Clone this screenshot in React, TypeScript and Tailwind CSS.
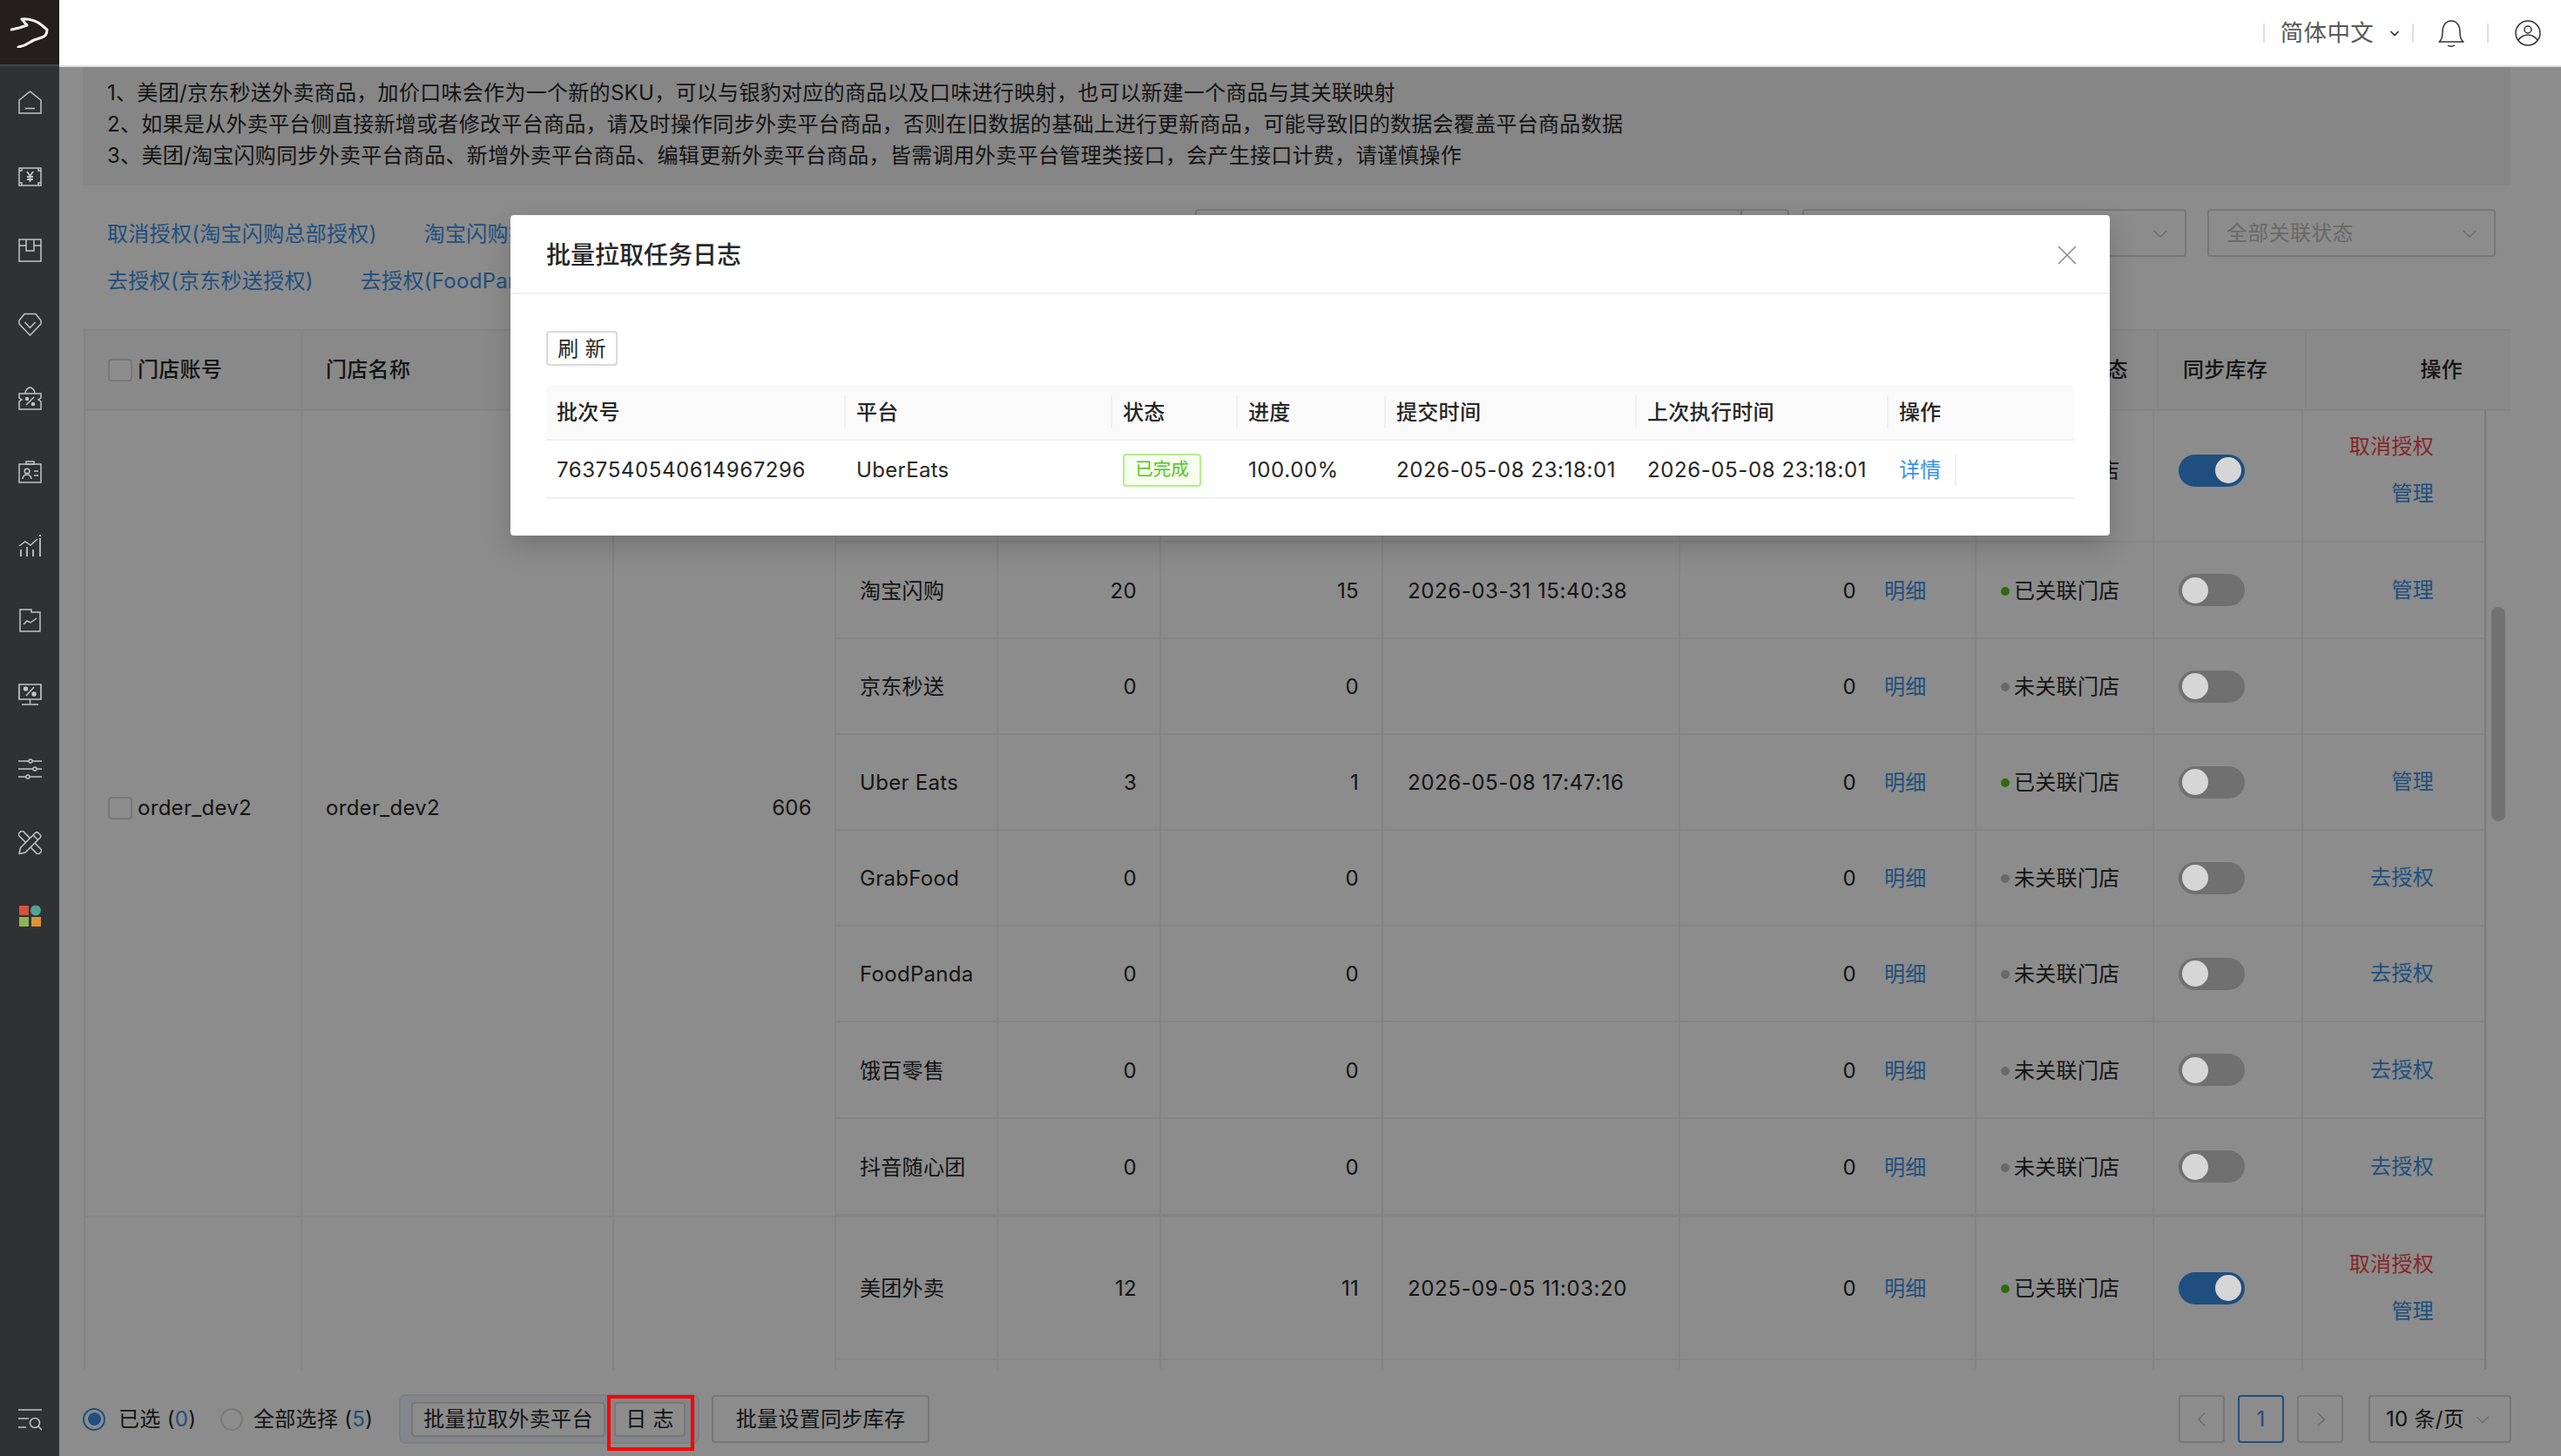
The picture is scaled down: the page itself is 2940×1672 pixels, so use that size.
import React from 'react';

// colours are the undimmed ones, the modal mask darkens everything under it
const FONT = 'font-[Inter,"Noto_Sans_CJK_SC",sans-serif]';

const Chevron = ({ className, dir = 'down', weight = 1.6 }: { className?: string; dir?: 'down' | 'left' | 'right'; weight?: number }) => (
  <svg viewBox="0 0 24 24" className={className} fill="none" stroke="currentColor" strokeWidth={weight}>
    {dir === 'down' && <path d="M3 8l9 9 9-9" />}
    {dir === 'left' && <path d="M16 3l-9 9 9 9" />}
    {dir === 'right' && <path d="M8 3l9 9-9 9" />}
  </svg>
);

const NavIcon = ({ children }: { children: React.ReactNode }) => (
  <svg viewBox="0 0 27 27" className="w-[27px] h-[27px]" fill="none" stroke="#c4c4c4" strokeWidth="1.5">
    {children}
  </svg>
);

const navIcons = [
  <NavIcon key="home">
    <path d="M1 11L13.5 1 26 11v15H1z" />
    <path d="M8 20.5h11" />
  </NavIcon>,
  <NavIcon key="money">
    <path d="M1 4h25v20H1z" />
    <path d="M4 4v3H1M23 4v3h3M4 24v-3H1M23 24v-3h3" />
    <path d="M10 8l3.5 5L17 8M13.5 13v7M10 14h7M10 17h7" strokeWidth="1.8" />
  </NavIcon>,
  <NavIcon key="box">
    <path d="M1 1h25v25H1z" />
    <path d="M1 8h8M18 8h8M9 1v13h9V1" />
  </NavIcon>,
  <NavIcon key="diamond">
    <path d="M7 1.5h13L26 9v4L13.5 26 1 13V9z" strokeLinejoin="round" />
    <path d="M7.5 11l6 6.5 6-6.5" />
  </NavIcon>,
  <NavIcon key="coupon">
    <path d="M1 8h25v5l-3 2 3 2v9H1v-9l3-2-3-2z" />
    <path d="M8 8c0-4 3-7 5.500-7S19 4 19 8" />
    <path d="M9 21l9-9" />
    <circle cx="10" cy="14" r="1.500" fill="#c4c4c4" />
    <circle cx="17" cy="20" r="1.500" fill="#c4c4c4" />
  </NavIcon>,
  <NavIcon key="card">
    <path d="M1 4h25v21H1z" />
    <path d="M9 1h9v3H9z" />
    <circle cx="10" cy="12" r="2.800" />
    <path d="M5 21c.5-4 2.500-5 5-5s4.500 1 5 5M18 12h5M18 17h5" />
  </NavIcon>,
  <NavIcon key="chart">
    <path d="M1 13l7-5 6 4 8-7" />
    <path d="M3 17v8M10 14v11M17 17v8M25 4v21" strokeWidth="1.8" />
    <path d="M25 0v2" strokeWidth="2" />
  </NavIcon>,
  <NavIcon key="report">
    <path d="M2 1h13v3h10v22H2z" />
    <path d="M6 18l4-4 4 2 7-5" />
  </NavIcon>,
  <NavIcon key="monitor">
    <path d="M1 2h25v17H1z" strokeWidth="1.7" />
    <path d="M13.500 19v5M4 25h19M9 15l9-10" />
    <circle cx="8.500" cy="7" r="2" fill="#c4c4c4" />
    <circle cx="18" cy="13" r="2" fill="#c4c4c4" />
  </NavIcon>,
  <NavIcon key="sliders">
    <path d="M0 5h27M0 14h27M0 23h27" />
    <circle cx="14" cy="5" r="2" fill="#303133" />
    <circle cx="19" cy="14" r="2" fill="#303133" />
    <circle cx="11" cy="23" r="2" fill="#303133" />
  </NavIcon>,
  <NavIcon key="tools">
    <rect x="10" y="-3" width="7" height="33" rx="2.500" transform="rotate(-45 13.5 13.5)" />
    <path d="M19.500 2.500a2.500 2.500 0 013.500 0l2 2a2.500 2.500 0 010 3.500L8 25l-7 1.500L2.500 19.500z" strokeLinejoin="round" fill="#303133" />
    <path d="M17 5l5.500 5.500" />
  </NavIcon>,
];

const AppsIcon = () => (
  <svg viewBox="0 0 27 27" className="w-[27px] h-[27px]">
    <rect x="1" y="1" width="11" height="11" fill="#d2553a" />
    <circle cx="20" cy="6.500" r="6" fill="#52a396" />
    <rect x="1" y="14" width="11" height="11" fill="#8db651" />
    <rect x="15" y="14" width="11" height="11" fill="#dc9237" />
  </svg>
);

const Sidebar = () => (
  <aside className="relative z-20 w-[68px] h-[1672px] shrink-0 bg-[#303133] flex flex-col items-center">
    <div className="w-full h-[76px] bg-[#231f1e] border-b-2 border-[#45474b] flex items-center justify-center shrink-0">
      <svg viewBox="0 0 44 36" className="w-[44px] h-[36px]" fill="none" stroke="#f2f2f2" strokeLinejoin="round" strokeLinecap="round">
        <path d="M1 15l9-2 9-3-6-7c9-1 19 3 23 7l6 5c0 5-2 8-6 9l-9 3c-5 2-7 6-18 8" strokeWidth="3" />
      </svg>
    </div>
    <div className="flex flex-col items-center gap-[58px] pt-[28px]">
      {navIcons.map((icon) => icon)}
      <AppsIcon />
    </div>
    <div className="mt-auto mb-[29px]">
      <NavIcon>
        <path d="M0 3h27M0 13h12M0 23h9" />
        <circle cx="19" cy="18" r="5.500" />
        <path d="M23 22l4 4" />
      </NavIcon>
    </div>
  </aside>
);

const Divider = () => <span className="block w-[2px] h-[22px] bg-[#dedede]" />;

const TopBar = () => (
  <header className="relative z-20 h-[77px] bg-white border-b-2 border-[#dcdcdc] flex items-center justify-end shrink-0">
    <Divider />
    <span className="ml-[18px] text-[26.500px] text-[#595959]">简体中文</span>
    <Chevron weight={3.500} className="w-[12px] h-[12px] ml-[18px] text-[#333]" />
    <span className="ml-[14px]"><Divider /></span>
    <svg viewBox="0 0 30 32" className="w-[30px] h-[32px] ml-[28px]" fill="none" stroke="#333" strokeWidth="1.500">
      <path d="M1 26c3-2 4-5 4-11C5 7 9 2 15 2s10 5 10 13c0 6 1 9 4 11z" strokeLinejoin="round" />
      <path d="M11 30c2 1.500 6 1.500 8 0" />
    </svg>
    <span className="ml-[26px]"><Divider /></span>
    <svg viewBox="0 0 30 30" className="w-[30px] h-[30px] ml-[30px] mr-[23px]" fill="none" stroke="#333" strokeWidth="1.500">
      <circle cx="15" cy="15" r="14" />
      <circle cx="15" cy="11" r="4" />
      <path d="M4 23c3-4 7-6 11-6s8 2 11 6" />
    </svg>
  </header>
);

const notices = [
  '1、美团/京东秒送外卖商品，加价口味会作为一个新的SKU，可以与银豹对应的商品以及口味进行映射，也可以新建一个商品与其关联映射',
  '2、如果是从外卖平台侧直接新增或者修改平台商品，请及时操作同步外卖平台商品，否则在旧数据的基础上进行更新商品，可能导致旧的数据会覆盖平台商品数据',
  '3、美团/淘宝闪购同步外卖平台商品、新增外卖平台商品、编辑更新外卖平台商品，皆需调用外卖平台管理类接口，会产生接口计费，请谨慎操作',
];

const Select = ({ width, label }: { width: string; label?: string }) => (
  <div className={`${width} h-[55px] border-2 border-[#d9d9d9] rounded-[4px] flex items-center justify-between pl-[20px] pr-[18px] bg-white`}>
    <span className="text-[#bfbfbf]">{label}</span>
    <Chevron className="w-[20px] h-[20px] text-[#bfbfbf]" />
  </div>
);

const Filters = () => (
  <div className="h-[165px] ml-[27px] mr-[58px] flex justify-between items-start shrink-0">
    <div className="pl-[28px] pt-[39px] flex flex-col gap-[20px] text-[#3a90e6] leading-[34px]">
      <div className="flex gap-[54px]">
        <span>取消授权(淘宝闪购总部授权)</span>
        <span>淘宝闪购授权</span>
      </div>
      <div className="flex gap-[54px]">
        <span>去授权(京东秒送授权)</span>
        <span>去授权(FoodPanda授权)</span>
      </div>
    </div>
    <div className="flex items-center mt-[27px] mr-[17px]">
      <div className="w-[628px] h-[55px] border-2 border-[#d9d9d9] rounded-l-[4px] bg-white" />
      <div className="w-[54px] h-[55px] border-2 border-l-0 border-[#d9d9d9] rounded-r-[4px] bg-white" />
      <div className="ml-[15px]"><Select width="w-[441px]" /></div>
      <div className="ml-[24px]"><Select width="w-[331px]" label="全部关联状态" /></div>
    </div>
  </div>
);

const Toggle = ({ on }: { on: boolean }) => (
  <div className={`w-[76px] h-[37px] rounded-full flex items-center px-[4px] ${on ? 'bg-[#3a90e6] justify-end' : 'bg-[#cccccc] justify-start'}`}>
    <span className="relative z-20 w-[30px] h-[30px] rounded-full bg-[#d6d6d6]" />
  </div>
);

type Row = {
  platform?: string;
  a?: number;
  b?: number;
  time?: string;
  linked?: boolean;
  sync?: boolean;
  action?: string[];
  height: string;
};

const group1: Row[] = [
  { platform: '美团外卖', a: 12, b: 11, time: '2025-09-05 11:03:20', linked: true, sync: true, action: ['取消授权', '管理'], height: 'h-[164px]' },
  { platform: '淘宝闪购', a: 20, b: 15, time: '2026-03-31 15:40:38', linked: true, action: ['管理'], height: 'h-[111px]' },
  { platform: '京东秒送', a: 0, b: 0, linked: false, height: 'h-[110px]' },
  { platform: 'Uber Eats', a: 3, b: 1, time: '2026-05-08 17:47:16', linked: true, action: ['管理'], height: 'h-[110px]' },
  { platform: 'GrabFood', a: 0, b: 0, linked: false, action: ['去授权'], height: 'h-[110px]' },
  { platform: 'FoodPanda', a: 0, b: 0, linked: false, action: ['去授权'], height: 'h-[110px]' },
  { platform: '饿百零售', a: 0, b: 0, linked: false, action: ['去授权'], height: 'h-[111px]' },
  { platform: '抖音随心团', a: 0, b: 0, linked: false, action: ['去授权'], height: 'h-[111px]' },
];

// second store, only its first row is on screen, the next one is scrolled off
const group2: Row[] = [
  { platform: '美团外卖', a: 12, b: 11, time: '2025-09-05 11:03:20', linked: true, sync: true, action: ['取消授权', '管理'], height: 'h-[164px]' },
  { height: 'h-[110px]' },
];

const PlatformRow = ({ row }: { row: Row }) => (
  <div className={`flex ${row.height} border-b-2 border-[#f0f0f0]`}>
    <div className="w-[186px] border-r-2 border-[#f3f3f3] flex items-center pl-[27px] pt-[2px]">{row.platform}</div>
    <div className="w-[187px] border-r-2 border-[#f3f3f3] flex items-center justify-end pr-[26px] pt-[2px]">{row.a}</div>
    <div className="w-[255px] border-r-2 border-[#f3f3f3] flex items-center justify-end pr-[26px] pt-[2px]">{row.b}</div>
    <div className="w-[341px] border-r-2 border-[#f3f3f3] flex items-center pl-[28px] pt-[2px] tracking-[0.6px]">{row.time}</div>
    <div className="w-[218px] flex items-center justify-end pr-[16px] pt-[2px]">{row.platform && '0'}</div>
    <div className="w-[122px] border-r-2 border-[#f3f3f3] flex items-center pl-[16px] pt-[2px] text-[#3a90e6]">{row.platform && '明细'}</div>
    <div className="w-[204px] border-r-2 border-[#f3f3f3] flex items-center pl-[28px] pt-[2px]">
      {row.platform && (
        <>
          <span className={`w-[10px] h-[10px] rounded-full ${row.linked ? 'bg-[#52c41a]' : 'bg-[#bfbfbf]'}`} />
          <span className="ml-[5px]">{row.linked ? '已关联门店' : '未关联门店'}</span>
        </>
      )}
    </div>
    <div className="w-[171px] border-r-2 border-[#f3f3f3] flex items-center pl-[28px]">
      {row.platform && <Toggle on={!!row.sync} />}
    </div>
    <div className="w-[208px] flex flex-col items-end justify-center gap-[20px] pr-[58px] leading-[34px]">
      {row.action?.map((a) => (
        <span key={a} className={a === '取消授权' ? 'text-[#f5484a]' : 'text-[#3a90e6]'}>{a}</span>
      ))}
    </div>
  </div>
);

const StoreGroup = ({ rows, account, name, count }: { rows: Row[]; account?: string; name?: string; count?: number }) => (
  <div className="flex border-b-2 border-[#f0f0f0]">
    <div className="w-[249px] shrink-0 border-r-2 border-[#f3f3f3] flex items-center pl-[26px]">
      {account && (
        <>
          <span className="w-[28px] h-[26px] border-2 border-[#d9d9d9] rounded-[4px] bg-white" />
          <span className="ml-[6px]">{account}</span>
        </>
      )}
    </div>
    <div className="w-[358px] shrink-0 border-r-2 border-[#f3f3f3] flex items-center pl-[27px]">{name}</div>
    <div className="w-[255px] shrink-0 border-r-2 border-[#f3f3f3] flex items-center justify-end pr-[26px]">{count}</div>
    <div className="flex-1">
      {rows.map((r, i) => (
        <PlatformRow key={i} row={r} />
      ))}
    </div>
  </div>
);

const headCell = 'h-full border-r-2 border-[#f0f0f0] flex items-center font-medium';

const StoreTable = () => (
  <div className="ml-[28px] mr-[58px] h-[1195px] border-l-2 border-[#f0f0f0] shrink-0 flex flex-col overflow-hidden">
    <div className="h-[94px] shrink-0 flex bg-[#fafafa] border-y-2 border-[#f0f0f0]">
      <div className={`${headCell} w-[249px] pl-[26px]`}>
        <span className="w-[28px] h-[26px] border-2 border-[#d9d9d9] rounded-[4px] bg-white" />
        <span className="ml-[6px]">门店账号</span>
      </div>
      <div className={`${headCell} w-[358px] pl-[27px]`}>门店名称</div>
      <div className={`${headCell} w-[255px]`} />
      <div className={`${headCell} w-[1309px]`} />
      <div className={`${headCell} w-[209px] pl-[28px]`}>门店关联状态</div>
      <div className={`${headCell} w-[170px] pl-[28px]`}>同步库存</div>
      <div className="h-full flex-1 flex items-center justify-end pr-[55px] font-medium">操作</div>
    </div>
    <div className="flex-1 flex overflow-hidden">
      <div className="w-[2754px] shrink-0 overflow-hidden">
        <div className="-mt-[13px]">
          <StoreGroup rows={group1} account="order_dev2" name="order_dev2" count={606} />
          <StoreGroup rows={group2} />
        </div>
      </div>
      <div className="flex-1 border-l-2 border-[#e0e0e0] pt-[225px] flex justify-center">
        <div className="w-[16px] h-[246px] rounded-full bg-[#cfcfcf]" />
      </div>
    </div>
  </div>
);

const PageBtn = ({ children, active }: { children: React.ReactNode; active?: boolean }) => (
  <div className={`w-[53px] h-[55px] border-2 rounded-[4px] flex items-center justify-center ${active ? 'border-[#3a90e6] text-[#3a90e6]' : 'border-[#d9d9d9] text-[#bfbfbf]'}`}>
    {children}
  </div>
);

const ToolBtn = ({ className, children }: { className: string; children: React.ReactNode }) => (
  <div className={`${className} border-2 border-[#d9d9d9] rounded-[4px] bg-white flex items-center justify-center`}>{children}</div>
);

const Footer = () => (
  <div className="h-[99px] pl-[27px] pr-[57px] pt-[28px] pb-[14px] flex items-center justify-between shrink-0">
    <div className="flex items-center">
      <span className="w-[26px] h-[26px] rounded-full border-2 border-[#3a90e6] flex items-center justify-center">
        <span className="w-[15px] h-[15px] rounded-full bg-[#3a90e6]" />
      </span>
      <span className="w-[117px] ml-[15px]">已选 (<span className="text-[#3a90e6]">0</span>)</span>
      <span className="w-[26px] h-[26px] rounded-full border-2 border-[#d9d9d9] bg-white" />
      <span className="w-[167px] ml-[12px]">全部选择 (<span className="text-[#3a90e6]">5</span>)</span>
      <div className="relative h-[57px] w-[345px] rounded-[8px] border-2 border-[#e2e7f0] bg-[#f0f5ff] flex items-center pl-[12px]">
        <ToolBtn className="w-[223px] h-[40px]">批量拉取外卖平台</ToolBtn>
        <ToolBtn className="w-[82px] h-[40px] ml-[10px]">日 志</ToolBtn>
        <div className="absolute z-20 left-[237px] -top-[1px] w-[100px] h-[64px] border-4 border-[#ff0000]" />
      </div>
      <ToolBtn className="w-[250px] h-[55px] ml-[14px]">批量设置同步库存</ToolBtn>
    </div>
    <div className="flex items-center">
      <PageBtn><Chevron dir="left" className="w-[20px] h-[20px]" /></PageBtn>
      <div className="ml-[15px]"><PageBtn active>1</PageBtn></div>
      <div className="ml-[15px]"><PageBtn><Chevron dir="right" className="w-[20px] h-[20px]" /></PageBtn></div>
      <div className="ml-[29px] w-[164px] h-[55px] border-2 border-[#d9d9d9] rounded-[4px] flex items-center pl-[18px]">
        <span>10 条/页</span>
        <Chevron className="w-[18px] h-[18px] ml-[12px] text-[#bfbfbf]" />
      </div>
    </div>
  </div>
);

const logCols = [
  { label: '批次号', width: 'w-[342px]' },
  { label: '平台', width: 'w-[306px]' },
  { label: '状态', width: 'w-[144px]' },
  { label: '进度', width: 'w-[170px]' },
  { label: '提交时间', width: 'w-[288px]' },
  { label: '上次执行时间', width: 'w-[289px]' },
  { label: '操作', width: 'flex-1' },
];

const LogModal = () => (
  <div className="absolute z-30 left-[586px] top-[247px] w-[1836px] h-[368px] bg-white rounded-[4px] shadow-[0_12px_32px_rgba(0,0,0,0.18)]">
    <div className="h-[91px] border-b-2 border-[#f0f0f0] flex items-center justify-between pl-[41px] pr-[38px] pt-[2px]">
      <span className="text-[28px] tracking-normal font-medium text-[#262626]">批量拉取任务日志</span>
      <svg viewBox="0 0 22 22" className="w-[22px] h-[22px]" fill="none" stroke="#8c8c8c" strokeWidth="1.600">
        <path d="M1 1l20 20M21 1L1 21" />
      </svg>
    </div>
    <div className="pl-[41px] pr-[41px] pt-[42px]">
      <div className="w-[82px] h-[40px] border-2 border-[#d9d9d9] rounded-[4px] flex items-center justify-center pt-[2px] shadow-[0_2px_0_rgba(0,0,0,0.02)]">刷 新</div>
      <div className="mt-[22px] h-[64px] flex bg-[#fafafa] border-b-2 border-[#f0f0f0] rounded-t-[4px]">
        {logCols.map((c, i) => (
          <div key={c.label} className={`${c.width} flex items-center font-medium`}>
            {i > 0 && <span className="w-[2px] h-[38px] bg-[#f0f0f0]" />}
            <span className="ml-[12px] pt-[2px]">{c.label}</span>
          </div>
        ))}
      </div>
      <div className="h-[67px] flex items-center border-b-2 border-[#f0f0f0] pt-[2px]">
        <div className="w-[342px] pl-[12px] tracking-[0.6px]">7637540540614967296</div>
        <div className="w-[306px] pl-[14px]">UberEats</div>
        <div className="w-[144px] pl-[14px]">
          <span className="w-[90px] h-[38px] flex items-center justify-center border-2 border-[#b7eb8f] bg-[#f6ffed] rounded-[4px] text-[20.500px] tracking-normal text-[#52c41a]">已完成</span>
        </div>
        <div className="w-[170px] pl-[14px] tracking-[0.6px]">100.00%</div>
        <div className="w-[288px] pl-[14px] tracking-[0.6px]">2026-05-08 23:18:01</div>
        <div className="w-[289px] pl-[14px] tracking-[0.6px]">2026-05-08 23:18:01</div>
        <div className="flex-1 pl-[14px] flex items-center">
          <span className="text-[#3a90e6]">详情</span>
          <span className="ml-[15px] w-[2px] h-[36px] bg-[#f0f0f0]" />
        </div>
      </div>
    </div>
  </div>
);

export default function App() {
  return (
    <div className={`relative w-[2940px] h-[1672px] overflow-hidden flex bg-white text-[24px] tracking-[0.3px] text-[#262626] ${FONT}`}>
      <Sidebar />
      <div className="flex-1 flex flex-col min-w-0">
        <TopBar />
        <div className="ml-[27px] mr-[58px] h-[136px] bg-[#f5f5f5] pl-[28px] pt-[12px] leading-[36px] shrink-0">
          {notices.map((n) => (
            <p key={n}>{n}</p>
          ))}
        </div>
        <Filters />
        <StoreTable />
        <Footer />
      </div>
      {/* modal mask */}
      <div className="absolute inset-0 z-10 bg-black/45" />
      <LogModal />
    </div>
  );
}
